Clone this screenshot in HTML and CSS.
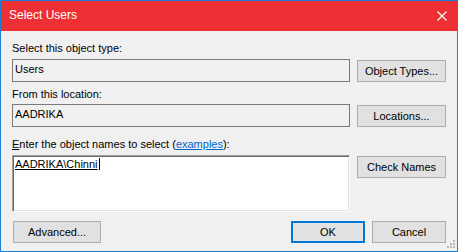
FILE: index.html
```html
<!DOCTYPE html>
<html lang="en">
<head>
  <meta charset="UTF-8" />
  <title>Select Users</title>
  <link rel="stylesheet" href="styles.css">
</head>
<body>
  <div class="dialog">
    <div class="titlebar">
      <span class="title">Select Users</span>
      <svg class="close" width="10" height="10" viewBox="0 0 10 10">
        <path d="M0.5 0.5 L9.5 9.5 M9.5 0.5 L0.5 9.5" stroke="#fff" stroke-width="1.2" fill="none" />
      </svg>
    </div>

    <div class="content">
      <div class="label first">Select this object type:</div>
      <div class="row">
        <div class="field">Users</div>
        <button class="btn side">Object Types...</button>
      </div>

      <div class="label second">From this location:</div>
      <div class="row row-loc">
        <div class="field">AADRIKA</div>
        <button class="btn side">Locations...</button>
      </div>

      <div class="label third"><u>E</u>nter the object names to select (<a href="#">examples</a>):</div>
      <div class="row row-names">
        <div class="names"><span class="resolved">AADRIKA\Chinni</span></div>
        <button class="btn side">Check Names</button>
      </div>

      <div class="actions">
        <button class="btn advanced">Advanced...</button>
        <div class="spacer"></div>
        <button class="btn small default">OK</button>
        <button class="btn small">Cancel</button>
      </div>
    </div>

    <svg class="grip" width="8" height="8" viewBox="0 0 8 8">
      <rect x="6" y="0" width="2" height="2" fill="#b8b8b8" />
      <rect x="3" y="3" width="2" height="2" fill="#b8b8b8" />
      <rect x="6" y="3" width="2" height="2" fill="#b8b8b8" />
      <rect x="0" y="6" width="2" height="2" fill="#b8b8b8" />
      <rect x="3" y="6" width="2" height="2" fill="#b8b8b8" />
      <rect x="6" y="6" width="2" height="2" fill="#b8b8b8" />
    </svg>
  </div>
</body>
</html>
```

FILE: styles.css
```css
body {
  margin: 0;
  font-family: "Liberation Sans", Arial, sans-serif;
  font-size: 11px;
  line-height: 13px;
  color: #000;
  background-color: #f0f0f0;
}

.dialog {
  position: relative;
  width: 458px;
  height: 252px;
  box-sizing: border-box;
  border: 1px solid #1b7fd5;
  background-color: #f0f0f0;
}

.titlebar {
  height: 30px;
  background-color: #ee2f33;
  display: flex;
  align-items: center;
  padding: 0 10px 0 8px;
  color: white;
  font-size: 12px;
}

.title {
  flex-grow: 1;
  margin-top: -1px;
}

.close {
  margin-top: -1px;
}

.content {
  padding: 0 11px 0 11px;
}

.label.first {
  margin-top: 11px;
}

.label.second {
  margin-top: 6px;
}

.label.third {
  margin-top: 11px;
}

.label a {
  color: #0066cc;
}

.row {
  display: flex;
  align-items: flex-start;
  gap: 7px;
  margin-top: 4px;
}

.row-loc {
  margin-top: 3px;
}

.field {
  width: 338px;
  height: 23px;
  box-sizing: border-box;
  border: 1px solid #7a7a7a;
  padding: 3px 2px 0;
  background-color: #f0f0f0;
}

.names {
  width: 338px;
  height: 57px;
  box-sizing: border-box;
  border: 1px solid;
  border-color: #a0a0a0 #ffffff #ffffff #a0a0a0;
  box-shadow: inset 1px 1px #696969, inset -1px -1px #e3e3e3;
  background-color: white;
  padding: 2px 2px 0;
}

.resolved {
  text-decoration: underline;
  border-right: 1px solid #000;
  padding-right: 1px;
}

.btn {
  font-family: "Liberation Sans", Arial, sans-serif;
  font-size: 11px;
  line-height: 13px;
  color: #000;
  background-color: #e1e1e1;
  border: 1px solid #adadad;
  height: 22px;
  box-sizing: border-box;
  padding: 0;
  margin: 0;
}

.side {
  width: 89px;
  margin-top: 1px;
}

.actions {
  display: flex;
  margin-top: 9px;
  gap: 7px;
}

.advanced {
  width: 88px;
  margin-left: 1px;
}

.spacer {
  flex-grow: 1;
}

.small {
  width: 74px;
}

.default {
  border: 2px solid #0078d7;
}

.grip {
  position: absolute;
  right: 2px;
  bottom: 3px;
}
```
